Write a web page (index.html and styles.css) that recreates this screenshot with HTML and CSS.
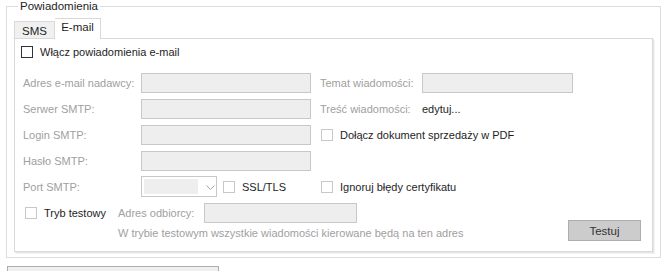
FILE: index.html
```html
<!DOCTYPE html>
<html lang="pl">
<head>
    <meta charset="UTF-8">
    <title>Powiadomienia</title>
    <link rel="stylesheet" href="styles.css">
</head>
<body>
    <fieldset class="group">
        <legend>Powiadomienia</legend>
        <div class="tabs">
            <span class="tab">SMS</span>
            <span class="tab active">E-mail</span>
        </div>
        <div class="panel">
            <label class="check enabled main-check"><span class="box"></span>Włącz powiadomienia e-mail</label>

            <div class="form">
                <div class="row">
                    <span class="label">Adres e-mail nadawcy:</span>
                    <span class="input wide"></span>
                    <span class="label right-label">Temat wiadomości:</span>
                    <span class="input subject"></span>
                </div>
                <div class="row">
                    <span class="label">Serwer SMTP:</span>
                    <span class="input wide"></span>
                    <span class="label right-label">Treść wiadomości:</span>
                    <span class="link">edytuj...</span>
                </div>
                <div class="row">
                    <span class="label">Login SMTP:</span>
                    <span class="input wide"></span>
                    <label class="check right-check"><span class="box"></span>Dołącz dokument sprzedaży w PDF</label>
                </div>
                <div class="row">
                    <span class="label">Hasło SMTP:</span>
                    <span class="input wide"></span>
                </div>
                <div class="row port-row">
                    <span class="label">Port SMTP:</span>
                    <span class="combo">
                        <span class="combo-fill"></span>
                        <svg class="chevron" width="9" height="5" viewBox="0 0 9 5"><path d="M0.5 0.5 L4.5 4.5 L8.5 0.5" fill="none" stroke="#a8a8a8" stroke-width="1"/></svg>
                    </span>
                    <label class="check ssl"><span class="box"></span>SSL/TLS</label>
                    <label class="check right-check"><span class="box"></span>Ignoruj błędy certyfikatu</label>
                </div>
            </div>

            <div class="test-row">
                <label class="check test-check"><span class="box"></span>Tryb testowy</label>
                <div class="test-fields">
                    <div class="test-line">
                        <span class="label">Adres odbiorcy:</span>
                        <span class="input recipient"></span>
                    </div>
                    <div class="test-line note-line">
                        <span class="note">W trybie testowym wszystkie wiadomości kierowane będą na ten adres</span>
                        <button class="btn">Testuj</button>
                    </div>
                </div>
            </div>
        </div>
    </fieldset>
    <div class="bottom-bar"></div>
</body>
</html>
```

FILE: styles.css
```css
body {
    margin: 0;
    background: #ffffff;
    font-family: "Liberation Sans", Arial, sans-serif;
    font-size: 11px;
    color: #1e1e1e;
    white-space: nowrap;
}
.group {
    margin: 0 7px 0 6px;
    padding: 0 5px 5px 7px;
    border: 1px solid #dcdcdc;
    min-width: 0;
}
.group legend {
    padding: 0 2px;
    margin-left: 4px;
    line-height: 13px;
    font-size: 11.5px;
    color: #1e1e1e;
}
.tabs {
    display: flex;
    align-items: flex-end;
    height: 20px;
    margin-top: 5px;
    position: relative;
    z-index: 1;
}
.tab {
    display: block;
    width: 39px;
    height: 16px;
    border: 1px solid #d9d9d9;
    border-bottom: none;
    background: #f0f0f0;
    line-height: 18px;
    text-align: center;
    font-size: 11.5px;
}
.tab.active {
    width: 45px;
    height: 20px;
    margin-bottom: -1px;
    border-left: none;
    background: #ffffff;
    line-height: 17px;
}
.panel {
    border: 1px solid #d9d9d9;
    box-shadow: 1px 1px 0 #e6e6e6, 2px 2px 0 #f2f2f2;
    margin-right: 2px;
    padding: 7px 0 10px 6px;
}
.check {
    display: flex;
    align-items: center;
    color: #1e1e1e;
}
.box {
    width: 10px;
    height: 10px;
    border: 1px solid #c8c8c8;
    background: #ffffff;
    margin-right: 7px;
    flex: none;
}
.check.enabled .box {
    border-color: #333333;
}
.main-check {
    height: 12px;
}
.form {
    margin-top: 15px;
    display: flex;
    flex-direction: column;
    gap: 6px;
}
.row {
    display: flex;
    align-items: center;
    height: 20px;
}
.row.port-row {
    height: 21px;
    margin-top: -1px;
}
.label {
    color: #a0a0a0;
    flex: none;
}
.row > .label:first-child {
    width: 118px;
    padding-left: 2px;
}
.input {
    display: block;
    height: 18px;
    border: 1px solid #c8c8c8;
    background: #eeeeee;
    flex: none;
}
.input.wide {
    width: 168px;
}
.right-label {
    width: 102px;
    margin-left: 9px;
}
.input.subject {
    width: 149px;
}
.link {
    color: #1e1e1e;
}
.right-check {
    margin-left: 10px;
}
.combo {
    display: flex;
    align-items: center;
    width: 74px;
    height: 19px;
    border: 1px solid #c8c8c8;
    background: #ffffff;
    flex: none;
}
.combo-fill {
    width: 54px;
    height: 15px;
    margin-left: 2px;
    background: #eeeeee;
}
.chevron {
    margin-left: 8px;
    margin-top: 1px;
}
.ssl {
    margin-left: 6px;
    width: 88px;
}
.test-row {
    display: flex;
    margin-top: 6px;
}
.test-check {
    width: 93px;
    padding-left: 4px;
    height: 20px;
    align-self: flex-start;
}
.test-fields {
    display: flex;
    flex-direction: column;
    flex: 1;
}
.test-line {
    display: flex;
    align-items: center;
    height: 20px;
}
.test-line .label {
    width: 86px;
}
.input.recipient {
    width: 151px;
}
.note-line {
    height: 21px;
    margin-top: -3px;
}
.note {
    color: #a0a0a0;
    padding-top: 5px;
}
.btn {
    margin-left: auto;
    margin-right: 11px;
    width: 73px;
    height: 21px;
    border: 1px solid #adadad;
    background: #cccccc;
    font-family: inherit;
    font-size: 11.5px;
    color: #333333;
    padding: 0;
}
.bottom-bar {
    margin: 8px 0 0 7px;
    width: 210px;
    height: 20px;
    border: 1px solid #adadad;
    background: #efefef;
}
```
